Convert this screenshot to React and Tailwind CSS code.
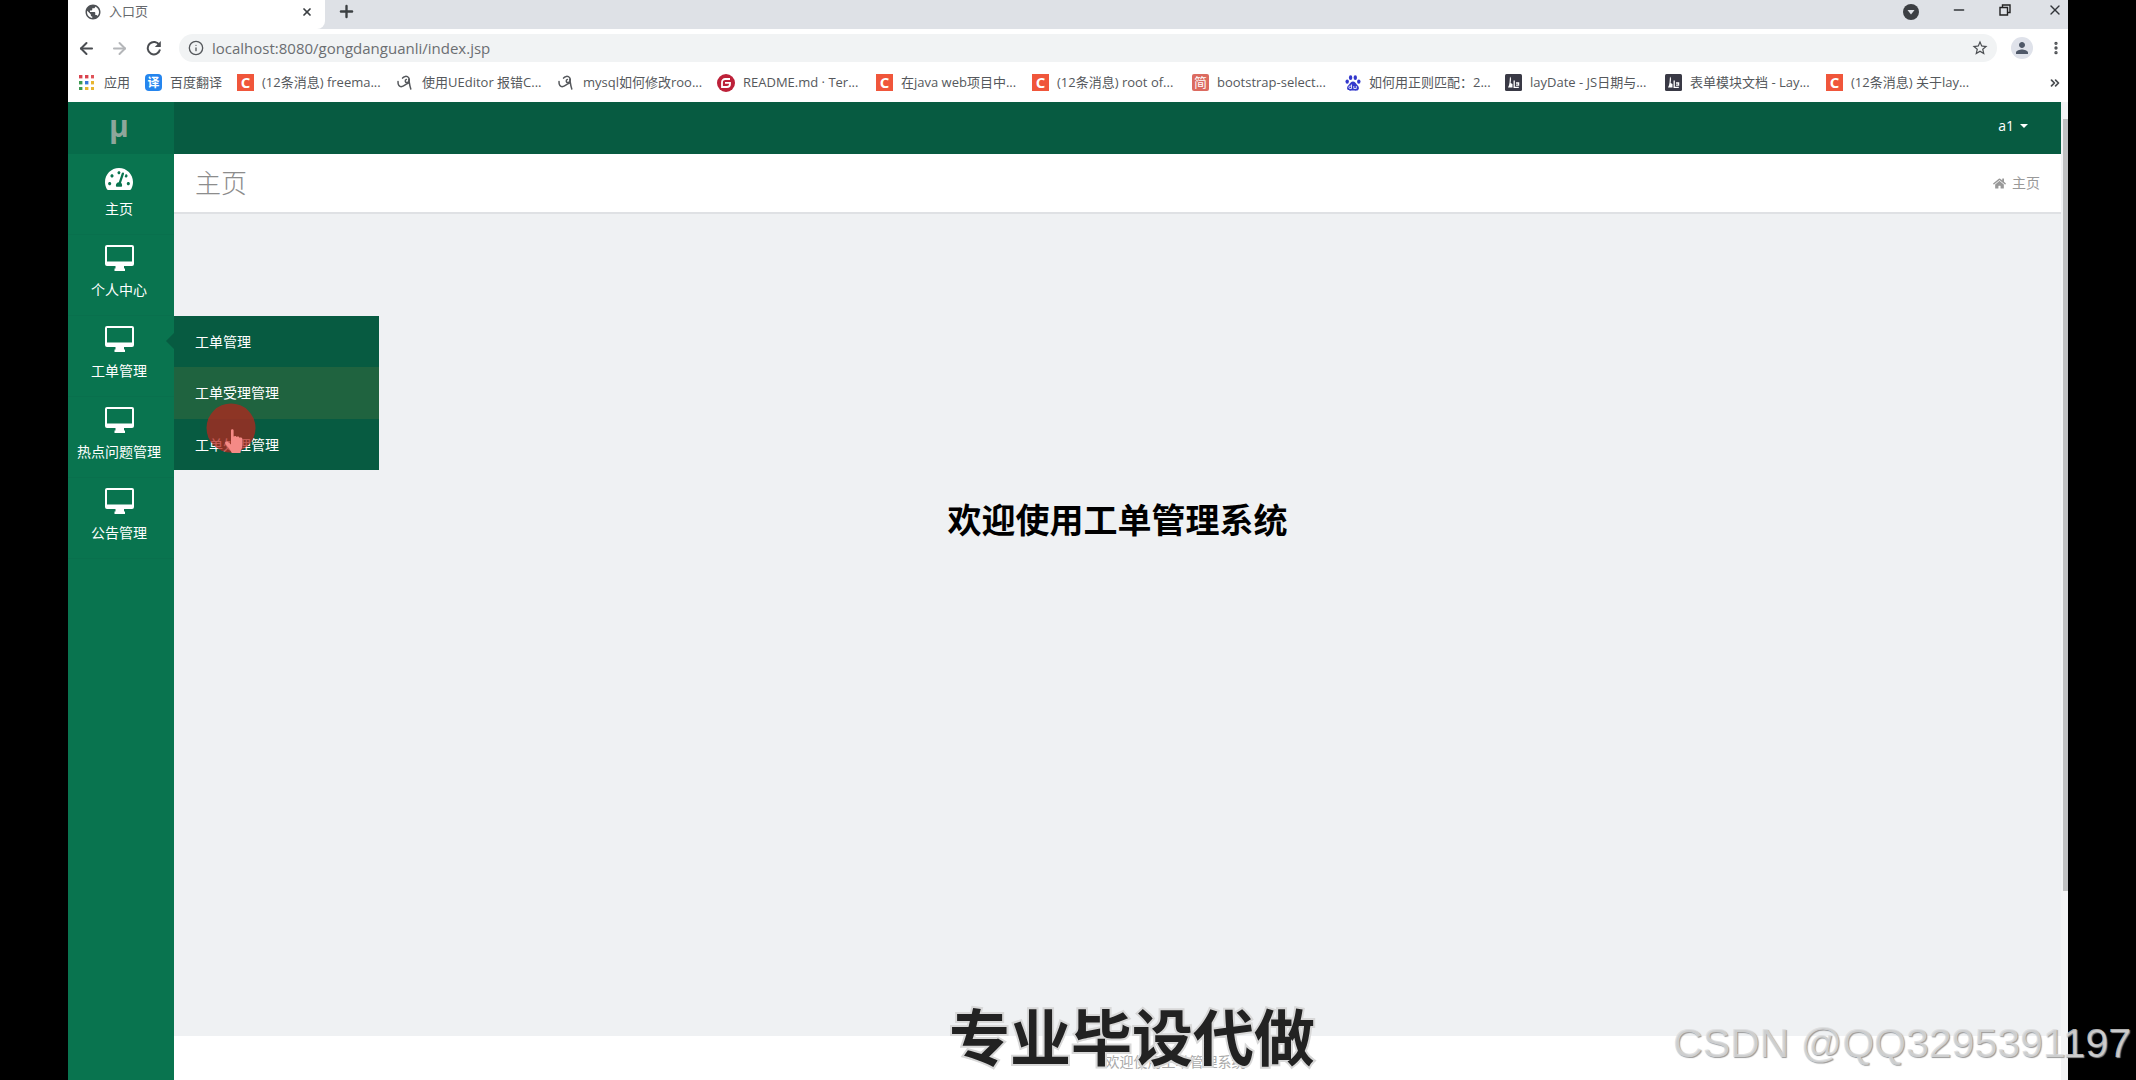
import React from "react";
import { FaTachometerAlt, FaHome } from "react-icons/fa";
import { MdStarBorder, MdPublic, MdPerson } from "react-icons/md";
import { ArrowLeft, ArrowRight, Plus, X, Info, EllipsisVertical, ChevronsRight, Minus } from "lucide-react";

function ReloadIcon() {
  return (
    <svg viewBox="0 0 16 16" className="size-4" fill="none" stroke="#4a4d51" strokeWidth="2">
      <path d="M13.4 5.2A6.2 6.2 0 1 0 14 9.6" />
      <path d="M14.8 1v6H8.8z" fill="#4a4d51" stroke="none" />
    </svg>
  );
}

function AppsIcon() {
  const colors = ["#d9434e", "#d9434e", "#e0545a", "#3e9a52", "#3a76d8", "#e8b530", "#3e9a52", "#e8b530", "#e8b530"];
  return (
    <svg viewBox="0 0 15 15" className="size-[15px]">
      {colors.map((c, i) => (
        <rect key={i} x={(i % 3) * 6} y={Math.floor(i / 3) * 6} width="3.4" height="3.4" fill={c} />
      ))}
    </svg>
  );
}

function Badge({ children, className }) {
  return (
    <span className={"flex size-[17px] items-center justify-center leading-none " + className}>{children}</span>
  );
}

const csdn = <Badge className="bg-[#f0563b] text-[15px] font-bold text-white">C</Badge>;

const scribble = (
  <svg viewBox="0 0 16 16" className="size-4" fill="none" stroke="#55585c" strokeWidth="1.5" strokeLinecap="round">
    <path d="M1 6.500C.8 10 2.400 12 4.800 11.600 7 11.200 8 9.400 11.500 8" />
    <path d="M5.500 3.200C6.500 1.200 10 .6 11.600 2.600c1.400 2 .6 4.800-1.600 5C8 7.700 7.600 5 9.400 4.400" />
    <path d="M11.800 4.500c.6 3 .6 5.500 2 9.500" />
  </svg>
);

const layui = (
  <svg viewBox="0 0 17 17" className="size-[17px]">
    <rect width="17" height="17" rx="1.500" fill="#393945" />
    <path d="M5 2.500c1.500 1.300 1 3.500.6 6.500l1.900 1v3.500H3c2-3 1.500-7 2-11z" fill="#fff" />
    <path d="M9.200 6.500v6.800h4.600M11 9h2.600v2.200H11" fill="none" stroke="#fff" strokeWidth="1.300" />
  </svg>
);

const gitee = (
  <svg viewBox="0 0 18 18" className="size-[18px]">
    <circle cx="9" cy="9" r="9" fill="#bd2139" />
    <path d="M13 5H8.200A3.200 3.200 0 0 0 5 8.200V13h5a3 3 0 0 0 3-3V8.900H8" fill="none" stroke="#fff" strokeWidth="1.800" />
  </svg>
);

const baidu = (
  <svg viewBox="0 0 16 16" className="size-4" fill="#3338cc">
    <ellipse cx="5.600" cy="2.700" rx="1.700" ry="2.400" />
    <ellipse cx="10.300" cy="2.700" rx="1.700" ry="2.400" />
    <ellipse cx="2.200" cy="6.600" rx="1.700" ry="2.200" />
    <ellipse cx="13.800" cy="6.600" rx="1.700" ry="2.200" />
    <path d="M8 6.500c2 0 2.600 1.800 4 3.200 1.600 1.500 2.400 2.800 1.600 4.600-1 2-3.400 1.300-5.600 1.300s-4.600.7-5.600-1.300c-.8-1.800 0-3.100 1.600-4.600C5.400 8.300 6 6.500 8 6.500z" />
    <path d="M6.500 9.500v4H5a1.200 1.200 0 0 1 0-2.400h1.500M8.800 11v2.500h2.500V11" fill="none" stroke="#fff" strokeWidth=".8" />
  </svg>
);

const bookmarks = [
  { icon: <AppsIcon />, label: "应用", width: "w-[66px]", gap: "gap-[10px]" },
  { icon: <Badge className="rounded-sm bg-[#2585ee] text-xs font-bold text-white">译</Badge>, label: "百度翻译", width: "w-[92px]" },
  { icon: csdn, label: "(12条消息) freema...", width: "w-[160px]" },
  { icon: scribble, label: "使用UEditor 报错C...", width: "w-[161px]", gap: "gap-[9px]" },
  { icon: scribble, label: "mysql如何修改roo...", width: "w-[159px]", gap: "gap-[9px]" },
  { icon: gitee, label: "README.md · Ter...", width: "w-[159px]" },
  { icon: csdn, label: "在java web项目中...", width: "w-[156px]" },
  { icon: csdn, label: "(12条消息) root of...", width: "w-[160px]" },
  { icon: <Badge className="rounded-xs bg-[#dc6b60] text-[13px] text-white">简</Badge>, label: "bootstrap-select...", width: "w-[153px]" },
  { icon: baidu, label: "如何用正则匹配：2...", width: "w-[160px]" },
  { icon: layui, label: "layDate - JS日期与...", width: "w-[160px]" },
  { icon: layui, label: "表单模块文档 - Lay...", width: "w-[161px]" },
  { icon: csdn, label: "(12条消息) 关于lay...", width: "w-[160px]" },
];

function TabStrip() {
  return (
    <div className="flex h-[29px] items-start bg-[#dee1e6]">
      <div className="flex h-full w-[257px] items-center rounded-br-lg bg-white pr-3 pb-[6px] pl-4">
        <MdPublic className="size-[18px] text-[#4e5155]" />
        <span className="ml-[7px] flex-1 text-[13px] leading-none text-[#66696d]">入口页</span>
        <button aria-label="关闭标签页"><X className="size-3 text-[#3c4043]" strokeWidth={3.5} /></button>
      </div>
      <button aria-label="新标签页" className="ml-3 pt-[2px]"><Plus className="size-[19px] text-[#3c4043]" strokeWidth={3} /></button>
      <div className="ml-auto flex items-center gap-8 pr-[5px]">
        <button aria-label="搜索标签页" className="mt-1">
          <svg viewBox="0 0 16 16" className="size-4"><circle cx="8" cy="8" r="8" fill="#3c3f43" /><path d="M4.500 6h7L8 10.500z" fill="#dee1e6" /></svg>
        </button>
        <button aria-label="最小化"><Minus className="size-4 text-[#33363a]" /></button>
        <button aria-label="还原" className="pr-1">
          <svg viewBox="0 0 12 12" className="size-3" fill="none" stroke="#222" strokeWidth="1.400"><path d="M1 3.500h7.500V11H1zM3.500 3.500V1H11v7.500H8.500" /></svg>
        </button>
        <button aria-label="关闭"><X className="size-4 text-[#33363a]" strokeWidth={2} /></button>
      </div>
    </div>
  );
}

function Toolbar() {
  return (
    <div className="flex h-[38px] items-center bg-white pr-1 pl-[9px]">
      <button aria-label="后退"><ArrowLeft className="size-[19px] text-[#4a4d51]" strokeWidth={2.5} /></button>
      <button aria-label="前进" className="ml-[14px]"><ArrowRight className="size-[19px] text-[#b4b6b9]" strokeWidth={2.5} /></button>
      <button aria-label="重新加载" className="ml-[17px]"><ReloadIcon /></button>
      <div className="ml-[17px] flex h-7 flex-1 items-center rounded-full bg-[#f1f3f4] pr-2 pl-[9px]">
        <Info className="size-4 text-[#55585c]" />
        <input
          aria-label="地址"
          className="ml-2 flex-1 bg-transparent text-[15px] leading-6 text-[#6b6e72] outline-none"
          defaultValue="localhost:8080/gongdanguanli/index.jsp"
        />
        <button aria-label="收藏"><MdStarBorder className="size-[18px] text-[#4a4d51]" /></button>
      </div>
      <button aria-label="用户" className="ml-[14px] flex size-[22px] items-center justify-center rounded-full bg-[#dfe2ea]">
        <MdPerson className="size-[18px] text-[#4f5868]" />
      </button>
      <button aria-label="菜单" className="ml-[15px]"><EllipsisVertical className="size-4 text-[#4a4d51]" strokeWidth={3} /></button>
    </div>
  );
}

function BookmarkBar() {
  return (
    <nav aria-label="书签" className="flex h-[35px] items-center bg-white pb-1 pl-[11px] text-[13px] text-[#55585c]">
      {bookmarks.map((b, i) => (
        <a key={i} href="#" className={"flex shrink-0 items-center whitespace-nowrap " + b.width + " " + (b.gap || "gap-2")}>
          <span className="shrink-0">{b.icon}</span>
          {b.label}
        </a>
      ))}
      <button aria-label="更多书签" className="mr-[6px] ml-auto"><ChevronsRight className="size-[14px] text-[#4a4d51]" strokeWidth={3} /></button>
    </nav>
  );
}

const menu = ["主页", "个人中心", "工单管理", "热点问题管理", "公告管理"];
const submenu = ["工单管理", "工单受理管理", "工单处理管理"];

function MonitorIcon() {
  return (
    <svg viewBox="0 0 29 26" className="h-[26px] w-[29px]" fill="#fff">
      <path fillRule="evenodd" d="M2 0h25a2 2 0 0 1 2 2v17a2 2 0 0 1-2 2h-8v2.500h1V26H9.500v-2.500h1V21H2a2 2 0 0 1-2-2V2a2 2 0 0 1 2-2zM2 2v14.500h25V2z" />
    </svg>
  );
}

function SideMenu() {
  return (
    <aside className="flex w-[106px] shrink-0 flex-col bg-[#09744f] text-white">
      <a href="#" className="flex h-[52px] items-center justify-center bg-[#076b4a] pr-1 pb-1 text-3xl leading-none font-bold text-[#8fa69b]">μ</a>
      {menu.map((m, i) => (
        <div key={m} className="relative border-b border-[#09704d]">
          <a href="#" className="flex h-20 flex-col items-center pt-[9px] pr-1 text-sm">
            <span className="flex h-7 items-center">
              {i === 0 ? <FaTachometerAlt className="mt-1 size-7" /> : <MonitorIcon />}
            </span>
            <span className="mt-2 leading-5 whitespace-nowrap">{m}</span>
          </a>
          {i === 2 && <SubMenu />}
        </div>
      ))}
    </aside>
  );
}

function SubMenu() {
  return (
    <div className="absolute top-0 left-full z-10 w-[205px] bg-[#075b41] text-sm">
      <span className="absolute top-[17px] right-full border-y-8 border-r-8 border-y-transparent border-r-[#075b41]" />
      {submenu.map((s, i) => (
        <a key={s} href="#" className={"flex items-center pl-[21px] " + (i === 1 ? "h-[52px] bg-[#1f633f]" : "h-[51px]")}>
          {s}
        </a>
      ))}
      <Pointer />
    </div>
  );
}

function Pointer() {
  return (
    <svg viewBox="0 0 50 52" className="absolute top-[87px] left-8 h-[52px] w-[50px]">
      <circle cx="25" cy="25" r="24.500" fill="#b3261e" fillOpacity="0.750" />
      <path d="M25 27.500c0-1.800 2.600-1.800 2.600 0v6c1-1 2.800-.8 3 .6 1-.9 2.700-.5 3 .8 1.200-.8 2.800-.1 2.800 1.400V42c0 3-1.500 4.500-2 8h-8.600c-1-3.500-5.200-6.500-6.600-9.500-.5-2 2-2.600 3.600-1l2.200 2z" fill="#f58a86" />
    </svg>
  );
}

export default function App() {
  return (
    <div className="relative flex h-screen flex-col overflow-hidden bg-black px-[68px] font-['Open_Sans','Noto_Sans_CJK_SC',sans-serif]">
      <TabStrip />
      <Toolbar />
      <BookmarkBar />
      <div className="flex min-h-0 flex-1">
        <SideMenu />
        <div className="flex min-w-0 flex-1 flex-col">
          <header className="flex h-[52px] shrink-0 items-center justify-end bg-[#075b41] pr-[33px]">
            <button className="flex items-center gap-[6px] pb-1 text-sm text-white">
              a1
              <span className="border-x-4 border-t-4 border-x-transparent border-t-white" />
            </button>
          </header>
          <div className="flex h-[60px] shrink-0 items-center justify-between border-b-2 border-[#dfe1e4] bg-white px-[21px]">
            <h1 className="text-[26px] font-light text-[#8c8c8c]">主页</h1>
            <a href="#" className="flex items-center gap-[6px] text-sm text-[#999]">
              <FaHome className="size-[13px]" />
              主页
            </a>
          </div>
          <main className="flex flex-1 justify-center bg-[#eff1f3] pt-[281px]">
            <h2 className="text-[34px] leading-[50px] font-bold text-black">欢迎使用工单管理系统</h2>
          </main>
          <footer className="flex h-11 shrink-0 items-center justify-center bg-white pt-2 pl-[116px] text-sm text-[#aaa]">
            欢迎使用工单管理系统
          </footer>
        </div>
        <div className="flex w-[7px] shrink-0 justify-end bg-[#f3f4f5] pt-[17px]">
          <div className="h-[772px] w-[5px] bg-[#bfc0c1]" />
        </div>
      </div>
      <p className="absolute bottom-0 left-[949px] text-[61px] leading-[84px] font-bold whitespace-nowrap text-[#222] [paint-order:stroke_fill] [-webkit-text-stroke:4px_#d8d8d8]">
        专业毕设代做
      </p>
      <p className="absolute right-[5px] bottom-[13px] font-['Liberation_Sans',sans-serif] text-[41px] leading-12 whitespace-nowrap text-[#dcddde]/80 [text-shadow:1px_1px_1px_#999]">
        CSDN @QQ3295391197
      </p>
    </div>
  );
}
